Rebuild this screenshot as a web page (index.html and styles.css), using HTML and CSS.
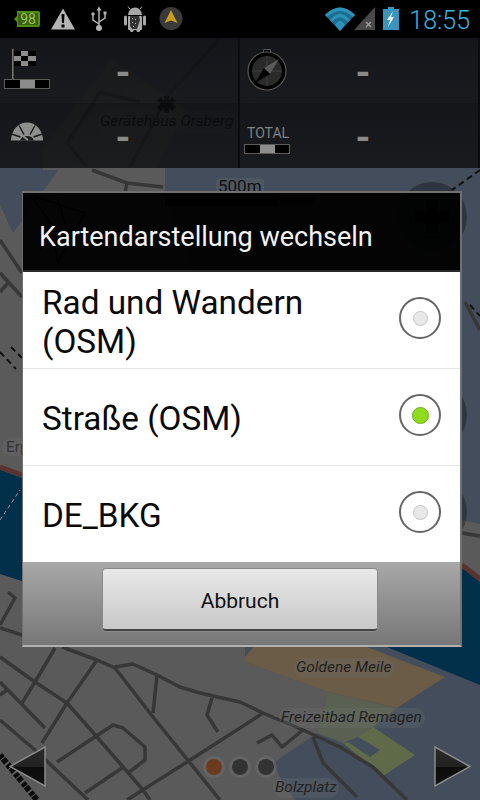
FILE: index.html
```html
<!DOCTYPE html>
<html lang="en">
<head>
<meta charset="UTF-8" />
<meta name="viewport" content="width=device-width, initial-scale=1" />
<title>Kartendarstellung wechseln</title>
<link rel="stylesheet" href="styles.css">
</head>
<body>
<div class="screen">

  <!-- map canvas -->
  <svg class="map" width="480" height="800" viewBox="0 0 480 800">
    <polygon class="land" points="0,205 13,233 60,168 165,168 165,195 240,400 245,647 245,662 328,692 317,733 273,763 283,783 295,800 0,800 0,574 22,580 22,475 0,467" />
    <polygon class="land" points="43,147 112,60 187,110 155,170 43,170" />
    <polygon class="land" points="462,520 480,524 480,580 462,565" />
    <polygon class="water" points="0,470 22,478 120,500 120,585 22,581 0,574" />
    <polygon class="water" points="387,647 480,685 480,582 462,568 462,647" />
    <polyline class="bank" points="0,467 22,475" />
    <polyline class="bank" points="462,565 480,579" />
    <polyline class="ferry" points="0,520 20,490" />
    <polygon class="tan" points="245,657 253,647 367,647 445,677 397,708 328,692 245,662" />
    <polygon class="hatch" points="328,692 397,708 373,727 358,737 343,743 317,733" />
    <polygon class="green" points="358,737 373,727 415,755 383,776 343,743 348,742 370,757 380,750" />

    <g class="roads">
      <polyline points="8,592 15,598 0,625" />
      <polyline points="0,628 22,635" />
      <polyline points="62,647 97,660 115,668" />
      <polyline points="115,667 133,664 157,675 180,687 200,693 240,702 263,713 303,730 340,747 373,767 407,800" />
      <polyline points="115,668 153,717 220,800" />
      <polyline points="157,675 153,713" />
      <polyline points="212,698 207,715 218,732" />
      <polyline points="263,713 240,728 187,762 127,800" />
      <polyline points="55,648 35,682 22,703" />
      <polyline points="0,657 35,682 67,703 97,737 143,790 150,800" />
      <polyline points="97,660 88,673 67,703 42,743" />
      <polyline points="0,682 45,728" />
      <polyline points="0,720 35,750 88,800" />
      <polyline points="57,762 113,725 123,728 145,747 145,760 128,773" />
      <polyline points="85,793 122,768" />
      <polyline points="0,695 7,690" />
      <polyline points="257,743 272,735 282,747 303,730" />
      <polyline points="313,737 323,763 357,797" />
      <polyline points="0,240 22,273" />
      <polyline points="0,273 22,297" />
      <polyline points="0,292 8,283" />
      <polyline points="92,170 127,183 163,187" />
      <polyline points="127,183 125,193" />
      <polyline points="465,302 480,330" />
      <polyline points="462,533 480,536" />
      <polyline points="100,92 140,102" />
      <polyline points="100,92 67,143 87,167" />
      <polyline points="220,38 167,97 130,167" />
    </g>
    <polyline class="rail" points="0,755 37,800" />
    <polyline class="rail-thin" points="0,352 16,369" />
    <polyline class="rail-thin" points="11,347 22,358" />
    <polyline class="rail-thin" points="480,170 452,190" />
    <polyline class="rail-thin" points="470,305 480,316" />

    <!-- things the dialog and the panel dim -->
    <circle class="zoom-ring" cx="432" cy="217" r="35" />
    <circle class="zoom-ring" cx="432" cy="415" r="35" />
    <circle class="zoom-ring" cx="432" cy="512" r="35" />
    <path d="M426 200h12v11h11v12h-11v11h-12v-11h-11v-12h11z" fill="#000" />
    <rect x="165" y="197" width="112" height="9" fill="#000" />
    <rect x="277" y="197" width="38" height="9" fill="#222" />
    <path class="nav-ghost" d="M30 195 85 213 58 262 50 222ZM50 222 40 250M58 200 70 240" />

    <path d="M164 96h5v4l4-3 3 4-4 3 4 3-3 4-4-3v5h-5v-5l-4 3-3-4 4-3-4-3 3-4 4 3z" fill="#000" />
    <rect class="pill" x="97" y="111" width="143" height="22" rx="11" />
    <rect class="pill" x="2" y="438" width="40" height="18" rx="9" />
    <rect class="pill" x="294" y="658" width="100" height="20" rx="10" />
    <rect class="pill" x="279" y="708" width="146" height="20" rx="10" />
    <rect class="pill" x="273" y="778" width="66" height="20" rx="10" />
    <rect class="pill" x="216" y="178" width="48" height="16" rx="4" />
    <text class="map-label dark" x="100" y="126">Gerätehaus Orsberg</text>
    <text class="map-label plain" x="6" y="452">Erp</text>
    <text class="map-label" x="296" y="672">Goldene Meile</text>
    <text class="map-label" x="281" y="722">Freizeitbad Remagen</text>
    <text class="map-label" x="275" y="792">Bolzplatz</text>
    <text class="map-label scale" x="218" y="192">500m</text>
  </svg>

  <div class="status-bar">
    <div class="slot">
      <svg width="36" height="38" viewBox="0 0 36 38">
        <path d="M8 11h21a2 2 0 0 1 2 2v12a2 2 0 0 1-2 2H8v-5l-3-3 3-3z" fill="#4f8f16" />
        <rect x="9" y="13" width="20" height="12" rx="1" fill="#35620f" />
        <text class="badge-text" x="19" y="24">98</text>
      </svg>
    </div>
    <div class="slot">
      <svg width="36" height="38" viewBox="0 0 36 38">
        <path d="M18 8.500 30 29.500H6z" fill="#b4b4b4" />
        <path d="M16.500 14h3l-.5 9h-2zM16.500 24.500h3v3h-3z" fill="#000" />
      </svg>
    </div>
    <div class="slot">
      <svg width="36" height="38" viewBox="0 0 36 38" fill="none" stroke="#b0b0b0" stroke-width="1.500">
        <path d="M18 10v17M18 24l-6-4v-5M18 22l6-4v-4" />
        <path d="M18 6.500l2.500 4h-5z" fill="#b0b0b0" stroke="none" />
        <circle cx="12" cy="14" r="1.700" fill="#b0b0b0" stroke="none" />
        <rect x="22.500" y="11.500" width="3" height="3" fill="#b0b0b0" stroke="none" />
        <circle cx="18" cy="28" r="3" fill="#b0b0b0" stroke="none" />
      </svg>
    </div>
    <div class="slot">
      <svg width="36" height="38" viewBox="0 0 36 38">
        <path d="M11 15a7 7.500 0 0 1 14 0z" fill="#a8a8a8" />
        <path d="M13 9l-2-2.500M23 9l2-2.500" stroke="#a8a8a8" />
        <rect x="7" y="15.500" width="3" height="10" rx="1.500" fill="#a8a8a8" />
        <rect x="26" y="15.500" width="3" height="10" rx="1.500" fill="#a8a8a8" />
        <rect x="11" y="16" width="14" height="14" rx="1" fill="#a8a8a8" />
        <rect x="13" y="26" width="3.500" height="6" rx="1.500" fill="#a8a8a8" />
        <rect x="19.500" y="26" width="3.500" height="6" rx="1.500" fill="#a8a8a8" />
        <path d="M13 16h9l1 4-3 9h-5l-2-3z" fill="#333" />
        <path d="M15 18h1v1h-1zM18 19h1v1h-1zM15 22h1v1h-1zM18 23h1v1h-1zM16 26h1v1h-1z" fill="#bbb" />
      </svg>
    </div>
    <div class="slot">
      <svg width="36" height="38" viewBox="0 0 36 38">
        <circle cx="18" cy="18.500" r="11.500" fill="#3a3a3a" />
        <path d="M18 10 24.500 23 18 20.500 11.500 23z" fill="#c79c22" />
      </svg>
    </div>
    <div class="status-right">
      <svg width="52" height="38" viewBox="0 0 52 38">
        <path d="M1 15Q16 0 31 15L16 31z" fill="#1d6f8f" />
        <path d="M1 15Q16 0 31 15L29 17Q16 5 3 17z" fill="#2a93bb" />
        <path d="M6 20Q16 8 26 20L24 22Q16 13 8 22z" fill="#2a93bb" />
        <path d="M11 25Q16 17 21 25L16 31z" fill="#2a93bb" />
        <path d="M30 30 51 7V30z" fill="#484848" />
        <path d="M42 22l5 5M47 22l-5 5" stroke="#a0a0a0" stroke-width="1.300" />
      </svg>
      <svg class="battery" width="16" height="38" viewBox="0 0 16 38">
        <path d="M5 7h6v2h5v21H0V9h5z" fill="#3a94bd" />
        <path d="M10 11 4 20h3l-2 7 6-10H8z" fill="#e8f4f8" />
      </svg>
      <span class="clock">18:55</span>
    </div>
  </div>

  <div class="info-panel">
    <div class="info-cell">
      <svg width="56" height="65" viewBox="0 0 56 65">
        <path d="M12 11h1.500v31H12z" fill="#777" />
        <rect x="14" y="13" width="22" height="15" fill="#000" />
        <path d="M21 13h7v5h-7zM14 18h7v5h-7zM28 18h8v5h-8zM21 23h7v5h-7z" fill="#8c8c8c" />
        <rect x="4.500" y="41.500" width="45" height="9" fill="#000" stroke="#5c5c5c" />
        <rect x="20" y="42" width="15" height="8" fill="#8c8c8c" />
      </svg>
      <span class="info-value">-</span>
    </div>
    <div class="info-cell">
      <svg width="56" height="65" viewBox="0 0 56 65">
        <path d="M11 37.500A16 18 0 0 1 43 37.500z" fill="#8e8e8e" />
        <path d="M20 37.500A7.500 7 0 0 1 34 37.500z" fill="#17191b" />
        <path d="M11.500 31l9 3M19 22.500l5 9M35 22.500l-5 9M42.500 31l-9 3" stroke="#17191b" stroke-width="1.500" />
        <path d="M28 37 19 30" stroke="#8e8e8e" stroke-width="2" />
      </svg>
      <span class="info-value">-</span>
    </div>
    <div class="info-cell">
      <svg width="56" height="65" viewBox="0 0 56 65">
        <path d="M23.500 11.500h7v4h-7z" fill="#000" stroke="#555" />
        <circle cx="27" cy="33" r="19" fill="#000" stroke="#555" stroke-width="1.200" />
        <circle cx="27" cy="33" r="15" fill="#2a2a2a" />
        <path d="M27 18v30M12 33h30" stroke="#3e3e3e" />
        <path d="M39 21 30 36 24 30z" fill="#5a5a5a" />
        <path d="M15 45 24 30 30 36z" fill="#000" />
      </svg>
      <span class="info-value">-</span>
    </div>
    <div class="info-cell">
      <svg width="56" height="65" viewBox="0 0 56 65">
        <text class="total-label" x="7" y="35">TOTAL</text>
        <rect x="4.500" y="41.500" width="45" height="9" fill="#000" stroke="#5c5c5c" />
        <rect x="20" y="42" width="15" height="8" fill="#8c8c8c" />
      </svg>
      <span class="info-value">-</span>
    </div>
  </div>

  <div class="map-controls">
    <svg width="38" height="42" viewBox="0 0 38 42">
      <path d="M1 20.500 36 1V40z" fill="url(#arrowFill)" stroke="#8a8a8a" stroke-width="1.500" />
      <defs>
        <linearGradient id="arrowFill" x1="0" y1="0" x2="0" y2="1">
          <stop offset="0" stop-color="#2a2a2a" />
          <stop offset="0.500" stop-color="#222" />
          <stop offset="0.520" stop-color="#0c0c0c" />
          <stop offset="1" stop-color="#111" />
        </linearGradient>
      </defs>
    </svg>
    <div class="pager">
      <span class="pager-dot active"></span>
      <span class="pager-dot"></span>
      <span class="pager-dot"></span>
    </div>
    <svg width="38" height="42" viewBox="0 0 38 42">
      <path d="M37 20.500 2 1V40z" fill="url(#arrowFill)" stroke="#8a8a8a" stroke-width="1.500" />
    </svg>
  </div>

  <div class="dialog">
    <div class="dialog-title">Kartendarstellung wechseln</div>
    <div class="dialog-list">
      <div class="dialog-row">
        <span class="row-label">Rad und Wandern (OSM)</span>
        <span class="radio"></span>
      </div>
      <div class="dialog-row">
        <span class="row-label">Straße (OSM)</span>
        <span class="radio checked"></span>
      </div>
      <div class="dialog-row">
        <span class="row-label">DE_BKG</span>
        <span class="radio"></span>
      </div>
    </div>
    <div class="dialog-footer">
      <button class="cancel-btn">Abbruch</button>
    </div>
  </div>

</div>
</body>
</html>
```

FILE: styles.css
```css
body {
  margin: 0;
  background: #000;
  font-family: Roboto, 'Liberation Sans', sans-serif;
}
.screen {
  position: relative;
  width: 480px;
  height: 800px;
  overflow: hidden;
  background: #434d5b;
}
.map {
  position: absolute;
  top: 0;
  left: 0;
}
.land { fill: #5a5a5a; }
.water { fill: #02304a; }
.tan { fill: #6a5c46; }
.hatch { fill: #5a6052; }
.green { fill: #5f6b48; }
.bank {
  fill: none;
  stroke: #5a3330;
  stroke-width: 5;
}
.ferry {
  fill: none;
  stroke: #8a97a3;
  stroke-width: 1;
  stroke-dasharray: 4 3;
}
.roads polyline {
  fill: none;
  stroke: #373737;
  stroke-width: 3.500;
  stroke-linejoin: round;
}
.rail {
  fill: none;
  stroke: #0a0a0a;
  stroke-width: 6;
  stroke-dasharray: 4 1 5 2;
}
.rail-thin {
  fill: none;
  stroke: #111;
  stroke-width: 2;
  stroke-dasharray: 6 4;
}
.zoom-ring { fill: rgba(0, 0, 0, 0.3); }
.nav-ghost {
  fill: none;
  stroke: #000;
  stroke-width: 2;
}
.pill { fill: rgba(120, 120, 120, 0.22); }
.map-label {
  font-family: Roboto, sans-serif;
  font-style: italic;
  font-size: 15.500px;
  fill: #222;
}
.map-label.dark { fill: #000; }
.map-label.plain { font-style: normal; fill: #333; }
.map-label.scale { font-style: normal; font-size: 17px; fill: #111; }

.status-bar {
  position: relative;
  display: flex;
  height: 38px;
  padding-left: 9px;
  background: #000;
}
.slot {
  width: 36px;
  height: 38px;
}
.slot svg, .status-right svg { display: block; }
.status-right {
  display: flex;
  align-items: center;
  margin-left: auto;
  padding-right: 10px;
}
.battery { margin-left: 7px; }
.clock {
  margin-left: 10px;
  padding-top: 2px;
  font-size: 25px;
  font-weight: 300;
  color: #33b5e5;
}
.badge-text {
  font-family: Roboto, sans-serif;
  font-size: 14px;
  text-anchor: middle;
  fill: #a0c058;
}

.info-panel {
  position: relative;
  display: grid;
  grid-template-columns: 240px 240px;
  grid-template-rows: 65px 65px;
  grid-auto-flow: column;
  height: 130px;
}
.info-cell {
  display: flex;
  align-items: center;
  padding-right: 48px;
  background: linear-gradient(rgba(11, 12, 14, 0.85), rgba(17, 18, 20, 0.85));
  border-right: 2px solid #0b0c0d;
  box-sizing: border-box;
}
.info-cell svg { flex: none; }
.info-value {
  flex: 1;
  padding-top: 4px;
  text-align: center;
  font-size: 38px;
  font-weight: 700;
  line-height: 12px;
  color: #8a8a8a;
}
.total-label {
  font-family: Roboto, sans-serif;
  font-size: 14px;
  fill: #808080;
}

.map-controls {
  position: absolute;
  left: 9px;
  right: 9px;
  bottom: 12px;
  display: flex;
  justify-content: space-between;
  align-items: center;
}
.pager {
  display: flex;
  gap: 10px;
}
.pager-dot {
  width: 16px;
  height: 16px;
  border-radius: 50%;
  background: #333;
  box-shadow: 0 0 0 3px rgba(120, 120, 120, 0.35);
}
.pager-dot.active { background: #6c3a1c; }

.dialog {
  position: absolute;
  top: 191px;
  left: 22px;
  width: 440px;
  height: 456px;
  box-sizing: border-box;
  border: 2px solid #707070;
  border-left-width: 1px;
  border-bottom-color: #b0b0b0;
  display: flex;
  flex-direction: column;
}
.dialog-title {
  height: 79px;
  padding: 11px 16px 0;
  display: flex;
  align-items: center;
  box-sizing: border-box;
  background: rgba(0, 0, 0, 0.94);
  border-bottom: 2px solid #2a2a2a;
  font-size: 27px;
  color: #f2f2f2;
}
.dialog-list {
  background: #fff;
}
.dialog-row {
  display: flex;
  align-items: center;
  height: 96px;
  padding: 0 19px 0 19px;
  border-bottom: 1px solid #e6e6e6;
}
.dialog-row:last-child { border-bottom: none; }
.row-label {
  flex: 1;
  padding-right: 60px;
  padding-top: 3px;
  font-size: 33.300px;
  line-height: 39px;
  color: #0a0a0a;
}
.radio {
  display: flex;
  align-items: center;
  justify-content: center;
  width: 38px;
  height: 38px;
  margin-bottom: 4px;
  border: 2px solid #666;
  border-radius: 50%;
}
.radio::after {
  content: "";
  width: 13px;
  height: 13px;
  border: 1px solid #c4c4c4;
  border-radius: 50%;
  background: #e8e8e8;
}
.radio.checked::after {
  width: 15px;
  height: 15px;
  border-color: #6fb01a;
  background: #8fdc1e;
}
.dialog-footer {
  flex: 1;
  display: flex;
  justify-content: center;
  padding-top: 7px;
  padding-right: 3px;
  background: linear-gradient(#a8a8a8, #777);
}
.cancel-btn {
  width: 274px;
  height: 62px;
  padding: 3px 0 0;
  border: none;
  border-bottom: 2px solid #444;
  border-radius: 3px;
  background: linear-gradient(#e8e8e8, #c8c8c8);
  box-shadow: 0 0 0 1px #8a8a8a;
  font-family: Roboto, sans-serif;
  font-size: 21px;
  color: #111;
}
```
